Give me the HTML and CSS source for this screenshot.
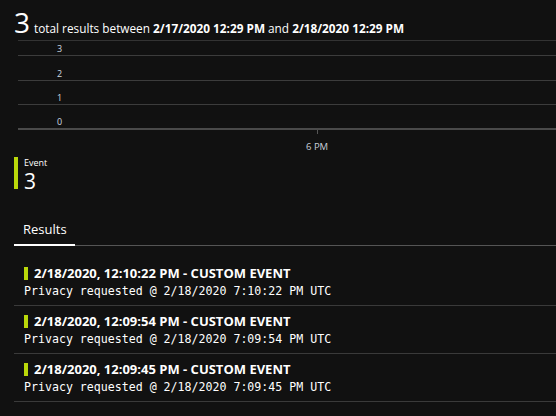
FILE: index.html
```html
<!DOCTYPE html>
<html>
<head>
<meta charset="utf-8">
<link rel="stylesheet" href="styles.css">
</head>
<body>
<div class="page">
  <div class="summary">
    <span class="count">3</span>
    <span class="desc">total results between <b>2/17/2020 12:29 PM</b> and <b>2/18/2020 12:29 PM</b></span>
  </div>
  <div class="chart">
    <div class="row r3"><span class="ylab">3</span></div>
    <div class="row r2"><span class="ylab">2</span></div>
    <div class="row r1"><span class="ylab">1</span></div>
    <div class="row r0"><span class="ylab">0</span></div>
    <div class="xaxis">
      <div class="xtick"><span class="tickmark"></span><span class="xlab">6 PM</span></div>
    </div>
  </div>
  <div class="legend">
    <span class="lbar"></span>
    <div class="ltext">
      <div class="lname">Event</div>
      <div class="lval">3</div>
    </div>
  </div>
  <div class="tabs">
    <div class="tab active">Results</div>
  </div>
  <ul class="results">
    <li class="item">
      <div class="title"><span class="ibar"></span>2/18/2020, 12:10:22 PM - CUSTOM EVENT</div>
      <div class="sub">Privacy requested @ 2/18/2020 7:10:22 PM UTC</div>
    </li>
    <li class="item">
      <div class="title"><span class="ibar"></span>2/18/2020, 12:09:54 PM - CUSTOM EVENT</div>
      <div class="sub">Privacy requested @ 2/18/2020 7:09:54 PM UTC</div>
    </li>
    <li class="item">
      <div class="title"><span class="ibar"></span>2/18/2020, 12:09:45 PM - CUSTOM EVENT</div>
      <div class="sub">Privacy requested @ 2/18/2020 7:09:45 PM UTC</div>
    </li>
  </ul>
</div>
</body>
</html>
```

FILE: styles.css
```css
html, body {
  margin: 0;
  padding: 0;
  background: #111111;
  color: #ffffff;
  font-family: "Open Sans", "Noto Sans", sans-serif;
}
.page {
  width: 556px;
  height: 416px;
  overflow: hidden;
}
.summary {
  display: flex;
  align-items: baseline;
  gap: 4px;
  padding: 5px 0 0 14px;
  height: 37px;
  box-sizing: border-box;
  white-space: nowrap;
}
.count {
  font-size: 28px;
  line-height: 34px;
}
.desc {
  font-size: 11.8px;
}
.desc b {
  font-weight: 700;
}
.chart {
  margin: 3px 0 0 18px;
  border-top: 1px solid #333333;
}
.row {
  display: flex;
  align-items: flex-end;
  border-bottom: 1px solid #3c3c3c;
  padding-left: 39px;
  box-sizing: border-box;
}
.r3 { height: 15px; }
.r2 { height: 25px; }
.r1 { height: 24px; }
.r0 { height: 25px; border-bottom: 2px solid #4a4a4a; }
.ylab {
  font-size: 9px;
  line-height: 11px;
  color: #cfd8e0;
  padding-bottom: 1px;
}
.xaxis {
  height: 27px;
  position: relative;
}
.xtick {
  position: absolute;
  left: 288px;
  top: 0;
  display: flex;
  flex-direction: column;
  align-items: center;
}
.tickmark {
  width: 1px;
  height: 4px;
  background: #555555;
}
.xlab {
  margin-top: 6px;
  font-size: 9.5px;
  color: #c8cfd8;
}
.legend {
  display: flex;
  gap: 6px;
  margin-left: 14px;
  height: 32px;
}
.lbar {
  width: 4px;
  height: 32px;
  background: #bad80a;
}
.ltext {
  display: flex;
  flex-direction: column;
}
.lname {
  font-size: 9px;
  line-height: 11px;
}
.lval {
  font-size: 21px;
  line-height: 22px;
  margin-top: 2px;
}
.tabs {
  display: flex;
  margin: 31px 0 0 14px;
  border-bottom: 1px solid #555555;
}
.tab {
  font-size: 13px;
  line-height: 18px;
  padding: 0 9px 6px 9px;
  width: 61px;
  box-sizing: border-box;
}
.tab.active {
  border-bottom: 2px solid #ffffff;
  margin-bottom: -1px;
}
.results {
  list-style: none;
  margin: 12px 0 0 14px;
  padding: 0;
}
.item {
  height: 48px;
  box-sizing: border-box;
  border-bottom: 1px solid #3a3a3a;
  padding: 6px 0 0 10px;
}
.title {
  display: flex;
  align-items: center;
  font-size: 13px;
  font-weight: 700;
  line-height: 18px;
}
.ibar {
  width: 4px;
  height: 13px;
  background: #bad80a;
  margin-right: 6px;
}
.sub {
  font-family: "DejaVu Sans Mono", "Liberation Mono", monospace;
  font-size: 11.6px;
  line-height: 16px;
  margin-top: 1px;
}
```
